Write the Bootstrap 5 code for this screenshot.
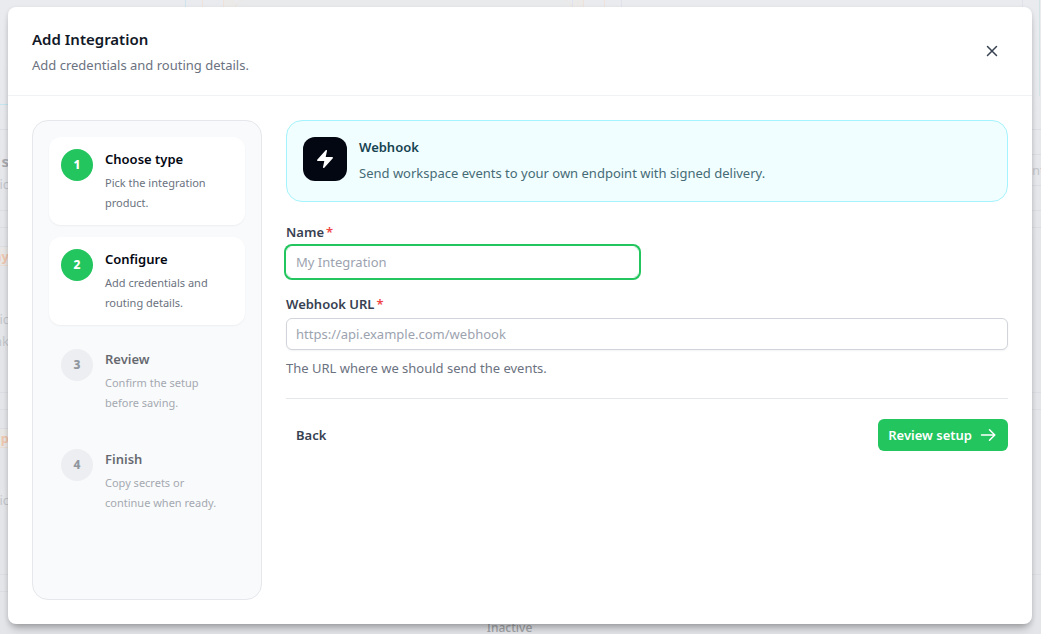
<!DOCTYPE html>
<html lang="en">
<head>
<meta charset="utf-8">
<meta name="viewport" content="width=device-width, initial-scale=1">
<title>Add Integration</title>
<link href="https://cdn.jsdelivr.net/npm/bootstrap@5.3.0/dist/css/bootstrap.min.css" rel="stylesheet">
<style>
  :root { --green: #22c55e; --slate-500: #6b7280; --line: #e5e7eb; }
  body { font-family: "Noto Sans", "Open Sans", sans-serif; font-size: 13px; line-height: 20px; color: #374151; background: #e6e7eb; }
  .stage { min-height: 100vh; padding: 7px 9px 10px 8px; }

  /* dimmed page behind the dialog */
  .behind { z-index: 0; color: #c3c5ca; background: linear-gradient(#eaebef, #e4e5e9 40%, #e4e5e9); }
  .behind .top-strip { height: 96px; }
  .behind .top-strip > span { border-left: 1px solid #e0e1ea; }
  .behind .rule-row { border-bottom: 1px solid #dcdde3; white-space: nowrap; }
  .left-rail, .right-rail { width: 9px; }
  .left-rail .rule-row { display: flex; flex-direction: column; align-items: flex-end; }
  .tint { background: #e8e6e4; border-color: #e9dcd4 !important; color: #edc5ae; }
  .state-label { margin: 0 22px -46px 0; font-size: 12px; font-weight: 500; color: #a3a5aa; }

  .dialog-panel { z-index: 1; background: #fff; border-radius: 8px; box-shadow: 0 8px 10px -4px rgba(0,0,0,.24), 0 2px 5px rgba(0,0,0,.14); }
  .dialog-head { padding: 20px 24px; border-bottom: 1px solid #f1f2f4; }
  .dialog-title { font-size: 15px; line-height: 24px; font-weight: 600; color: #111827; }
  .muted { color: var(--slate-500); }
  .close-btn { width: 32px; height: 32px; color: #374151; }

  .steps { width: 230px; background: #f9fafb; border: 1px solid var(--line); border-radius: 16px; }
  .step-list { gap: 12px; }
  .step-item { min-height: 88px; padding: 12px; border-radius: 12px; }
  .step-item.active { background: #fff; box-shadow: 0 1px 2px rgba(0,0,0,.05); }
  .step-item.pending { opacity: .6; }
  .step-num { width: 32px; height: 32px; font-size: 12px; font-weight: 800; background: #e5e7eb; color: #4b5563; }
  .active .step-num { background: var(--green); color: #fff; }
  .step-body { margin-left: 12px; }
  .step-name { font-weight: 600; color: #030712; }
  .step-text { max-width: 120px; margin-top: 4px; font-size: 11px; color: var(--slate-500); }

  .product { min-height: 82px; background: #f1feff; border: 1px solid #a5f3fc; border-radius: 16px; }
  .product-icon { width: 44px; height: 44px; background: #030712; border-radius: 12px; }
  .product-name { font-weight: 600; color: #164451; }
  .product-text { margin-top: 6px; color: #456b76; }

  .field-label { font-weight: 600; color: #374151; }
  .field-label span { margin-left: 2px; color: #ef4444; }
  .form-control { height: 32px; padding: 0 9px; font-size: 13px; line-height: 20px; border: 1px solid #d1d5db; border-radius: 6px; box-shadow: 0 1px 2px rgba(0,0,0,.05); }
  .form-control::placeholder { color: #9ca3af; }
  .form-control:focus, .form-control.ringed { border-color: #fff; box-shadow: 0 0 0 2px var(--green); }
  .name-field { width: calc(50% - 8px); margin-top: 20px; }
  .actions { border-top: 1px solid var(--line); padding-top: 20px; margin-top: 20px; }
  .actions .btn { height: 32px; padding: 0 10px; border: 0; border-radius: 6px; font-size: 13px; line-height: 20px; font-weight: 600; }
  .btn-next, .btn-next:hover { gap: 6px; background: var(--green); color: #fff; }
  .btn-back { color: #374151; }
</style>
</head>
<body>
<div class="stage position-relative d-flex">

  <div class="behind position-absolute top-0 start-0 w-100 h-100 overflow-hidden" aria-hidden="true">
    <div class="top-strip d-flex">
      <span style="margin-left:185px;width:17px;border-color:#cfe5ee"></span>
      <span style="width:21px;border-color:#eee2da"></span>
      <span style="width:12px;background:#ebeae9;border-color:#eee2da"></span>
      <span class="rounded-3" style="width:337px;background:#e9eaec;border:1px solid #eee5da;border-top:0"></span>
      <span style="width:11px;background:#ebeae9"></span>
      <span style="width:21px;border-color:#eee2da"></span>
      <span style="width:17px;border-color:#eee2da"></span>
      <span class="flex-fill"></span>
      <span style="width:17px"></span>
      <span style="width:2px;border-color:#d3e4e6"></span>
    </div>
    <div class="d-flex justify-content-between">
      <div class="left-rail">
        <div class="rule-row" style="height:9px;border-color:#c5e6ef"></div>
        <div class="rule-row" style="height:25px"></div>
        <div class="rule-row" style="height:81px;padding-top:21px"><b class="d-block" style="font-size:15px;color:#a9abb0">s</b><div style="padding-top:3px">ic</div></div>
        <div class="rule-row" style="height:17px"></div>
        <div class="rule-row" style="height:19px"></div>
        <div class="rule-row tint" style="height:19px;line-height:18px"><b>ay</b></div>
        <div class="rule-row" style="height:127px;padding-top:43px"><div>ic</div><div style="padding-top:2px">nk</div></div>
        <div class="rule-row" style="height:17px"></div>
        <div class="rule-row" style="height:19px"></div>
        <div class="rule-row tint" style="height:19px;line-height:18px"><b>p</b></div>
        <div class="rule-row" style="height:127px;padding-top:42px">ic</div>
        <div class="rule-row" style="height:17px"></div>
      </div>
      <div class="state-label align-self-end">Inactive</div>
      <div class="right-rail">
        <div class="rule-row" style="height:34px"></div>
        <div class="rule-row" style="height:25px"></div>
        <div class="rule-row" style="height:31px;padding-top:5px">nt</div>
        <div class="rule-row" style="height:25px"></div>
        <div class="rule-row" style="height:17px"></div>
        <div class="rule-row" style="height:165px"></div>
        <div class="rule-row" style="height:17px"></div>
        <div class="rule-row" style="height:165px"></div>
      </div>
    </div>
  </div>

  <main class="dialog-panel position-relative flex-fill d-flex flex-column" role="dialog" aria-labelledby="dlg-title">
    <header class="dialog-head d-flex justify-content-between align-items-center">
      <div>
        <h1 class="dialog-title mb-1" id="dlg-title">Add Integration</h1>
        <p class="muted mb-0">Add credentials and routing details.</p>
      </div>
      <button type="button" class="close-btn btn border-0 p-0 d-flex align-items-center justify-content-center" aria-label="Close">
        <svg width="12" height="12" viewBox="0 0 12 12" fill="none" stroke="currentColor" stroke-width="1.5" stroke-linecap="round"><path d="M1.5 1.5l9 9M10.500 1.500l-9 9"/></svg>
      </button>
    </header>

    <div class="flex-fill d-flex gap-4 p-4">
      <aside class="steps flex-shrink-0 p-3">
        <ol class="step-list list-unstyled mb-0 d-grid">
          <li class="step-item active d-flex">
            <span class="step-num rounded-circle d-flex flex-shrink-0 align-items-center justify-content-center">1</span>
            <div class="step-body"><div class="step-name">Choose type</div><div class="step-text">Pick the integration product.</div></div>
          </li>
          <li class="step-item active d-flex">
            <span class="step-num rounded-circle d-flex flex-shrink-0 align-items-center justify-content-center">2</span>
            <div class="step-body"><div class="step-name">Configure</div><div class="step-text">Add credentials and routing details.</div></div>
          </li>
          <li class="step-item pending d-flex">
            <span class="step-num rounded-circle d-flex flex-shrink-0 align-items-center justify-content-center">3</span>
            <div class="step-body"><div class="step-name">Review</div><div class="step-text">Confirm the setup before saving.</div></div>
          </li>
          <li class="step-item pending d-flex">
            <span class="step-num rounded-circle d-flex flex-shrink-0 align-items-center justify-content-center">4</span>
            <div class="step-body"><div class="step-name">Finish</div><div class="step-text">Copy secrets or continue when ready.</div></div>
          </li>
        </ol>
      </aside>

      <form class="flex-fill">
        <div class="product d-flex p-3">
          <div class="product-icon d-flex flex-shrink-0 align-items-center justify-content-center">
            <svg width="20" height="20" viewBox="0 0 20 20" fill="#fff"><path d="M11.983 1.907a.75.75 0 0 0-1.292-.657l-8.5 9.5A.75.75 0 0 0 2.75 12h6.572l-1.305 6.093a.75.75 0 0 0 1.292.657l8.5-9.5A.75.75 0 0 0 17.25 8h-6.572l1.305-6.093Z"/></svg>
          </div>
          <div class="step-body">
            <div class="product-name">Webhook</div>
            <div class="product-text">Send workspace events to your own endpoint with signed delivery.</div>
          </div>
        </div>

        <div class="name-field">
          <label class="field-label d-block mb-1" for="name">Name<span>*</span></label>
          <input class="form-control ringed" id="name" type="text" placeholder="My Integration">
        </div>
        <div class="mt-3">
          <label class="field-label d-block mb-1" for="url">Webhook URL<span>*</span></label>
          <input class="form-control" id="url" type="url" placeholder="https://api.example.com/webhook" aria-describedby="url-help">
          <div class="muted mt-2" id="url-help">The URL where we should send the events.</div>
        </div>

        <div class="actions d-flex justify-content-between">
          <button type="button" class="btn btn-back">Back</button>
          <button type="submit" class="btn btn-next d-flex align-items-center">Review setup
            <svg width="20" height="20" viewBox="0 0 20 20" fill="none" stroke="currentColor" stroke-width="1.5" stroke-linecap="round" stroke-linejoin="round"><path d="M3.500 10h13M11.500 4.700L16.800 10l-5.300 5.300"/></svg>
          </button>
        </div>
      </form>
    </div>
  </main>
</div>
<script src="https://cdn.jsdelivr.net/npm/bootstrap@5.3.0/dist/js/bootstrap.bundle.min.js"></script>
</body>
</html>
